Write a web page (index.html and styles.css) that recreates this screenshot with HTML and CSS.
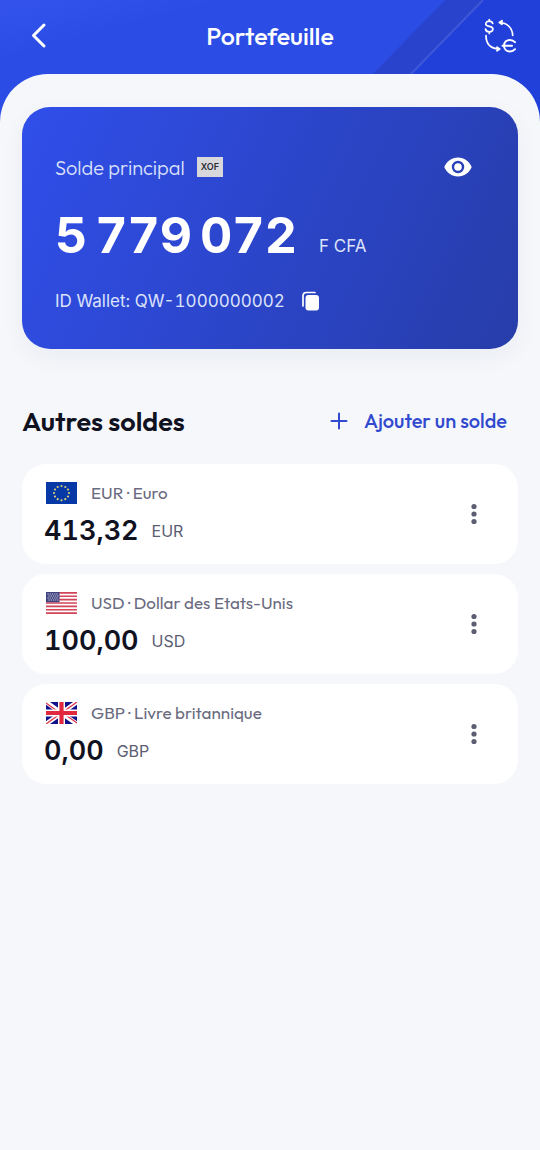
FILE: index.html
```html
<!DOCTYPE html>
<html lang="fr">
<head>
<meta charset="utf-8">
<meta name="viewport" content="width=device-width, initial-scale=1">
<title>Portefeuille</title>
<link rel="stylesheet" href="styles.css">
</head>
<body>
<div class="app">
  <svg class="backdrop" viewBox="0 0 200 160" aria-hidden="true">
    <path d="M143 0H200V160H-13z" fill="#2140da"/>
    <path d="M105 0H143L-13 160H-51z" fill="#2943cc"/>
    <path d="M143 0L-13 160" stroke="#3d58d8" stroke-width="2"/>
  </svg>
  <header class="topbar">
    <button class="icon-button" type="button" aria-label="Retour">
      <svg width="32" height="32" viewBox="0 0 32 32" fill="none" stroke="#fff" stroke-width="3" stroke-linecap="round" stroke-linejoin="round"><path d="M20 5L9.500 15.500L20 26"/></svg>
    </button>
    <h1 class="title">Portefeuille</h1>
    <button class="icon-button" type="button" aria-label="Convertir des devises">
      <svg width="36" height="38" viewBox="0 0 36 38" fill="none" stroke="#fff" stroke-width="1.700" stroke-linecap="round" stroke-linejoin="round">
        <path d="M10.700 6.500C10.300 4.800 9 4.200 7.300 4.200C5.400 4.200 3.800 5.200 3.800 6.900C3.800 10.600 10.900 8.200 10.900 12C10.900 13.800 9.200 14.800 7.300 14.800C5.300 14.800 3.800 13.900 3.500 12M7.300 2.500V4M7.300 15V16.500"/>
        <path d="M17.500 5.500C25 5.700 30.500 11 30.700 18.500M20 3.700L17.300 5.500L20 7.300Z"/>
        <path d="M4 18.500C4 26.500 8.500 31.500 17 32M15 30.200L17.700 32L15 33.800Z"/>
        <path stroke-width="2" d="M33 25.200C31.500 23.500 29.900 22.900 28 22.900C24.400 22.900 22 25.400 22 28.700C22 32 24.400 34.500 28 34.500C29.900 34.500 31.500 33.900 33 32.200M20.500 28.700H30"/>
      </svg>
    </button>
  </header>

  <main class="sheet">
    <section class="wallet" aria-label="Solde principal">
      <div class="wallet-head">
        <span class="wallet-label">Solde principal</span>
        <span class="badge">XOF</span>
        <button class="icon-button wallet-eye" type="button" aria-label="Masquer le solde">
          <svg width="28" height="20" viewBox="0 0 28 20"><path fill="#fff" fill-rule="evenodd" d="M14 .5C7.800 .5 2.500 4.400.3 10C2.500 15.600 7.800 19.500 14 19.500S25.500 15.600 27.700 10C25.500 4.400 20.200.5 14 .5ZM14 3.800A6.200 6.200 0 1 1 14 16.200A6.200 6.200 0 1 1 14 3.800Z"/><circle cx="14" cy="10" r="3.800" fill="#fff"/></svg>
        </button>
      </div>
      <p class="balance"><span class="balance-value">5&#8239;779&#8239;072</span><span class="balance-unit">F CFA</span></p>
      <div class="wallet-id">
        <span>ID Wallet: QW-1000000002</span>
        <button class="icon-button" type="button" aria-label="Copier l’identifiant">
          <svg width="20" height="20" viewBox="0 0 20 20"><rect x="4.500" y="4" width="13.500" height="15.500" rx="3" fill="#fff"/><path d="M2 15V5C2 2.800 3.300 1.500 5.500 1.500H14" fill="none" stroke="#fff" stroke-width="1.700" stroke-linecap="round"/></svg>
        </button>
      </div>
    </section>

    <section class="others" aria-labelledby="others-title">
      <div class="others-head">
        <h2 class="others-title" id="others-title">Autres soldes</h2>
        <button class="add" type="button">
          <svg width="18" height="18" viewBox="0 0 18 18" fill="none" stroke="currentColor" stroke-width="2" stroke-linecap="round"><path d="M9 1.500V16.500M1.500 9H16.500"/></svg>
          <span>Ajouter un solde</span>
        </button>
      </div>
      <ul class="list">
        <li class="account">
          <div class="account-body">
            <div class="account-name">
              <svg class="flag" viewBox="0 0 31 22" aria-hidden="true"><rect width="31" height="22" fill="#0639a6"/><g fill="#d9cf78"><circle cx="15.500" cy="4" r="1.100"/><circle cx="19.300" cy="5" r="1.100"/><circle cx="22" cy="7.500" r="1.100"/><circle cx="23" cy="11" r="1.100"/><circle cx="22" cy="14.500" r="1.100"/><circle cx="19.300" cy="17.200" r="1.100"/><circle cx="15.500" cy="18.300" r="1.100"/><circle cx="11.700" cy="17.200" r="1.100"/><circle cx="9" cy="14.500" r="1.100"/><circle cx="8" cy="11" r="1.100"/><circle cx="9" cy="7.500" r="1.100"/><circle cx="11.700" cy="5" r="1.100"/></g></svg>
              <span>EUR · Euro</span>
            </div>
            <p class="account-amount"><span class="account-value">413,32</span><span class="account-unit">EUR</span></p>
          </div>
          <button class="icon-button" type="button" aria-label="Options du solde EUR"><svg width="8" height="22" viewBox="0 0 8 22" fill="#5c5d73"><circle cx="4" cy="3.500" r="2.600"/><circle cx="4" cy="11" r="2.600"/><circle cx="4" cy="18.500" r="2.600"/></svg></button>
        </li>
        <li class="account">
          <div class="account-body">
            <div class="account-name">
              <svg class="flag" viewBox="0 0 31 22" aria-hidden="true"><rect width="31" height="22" fill="#fff"/><path d="M0 .85H31M0 4.230H31M0 7.620H31M0 11H31M0 14.380H31M0 17.770H31M0 21.150H31" stroke="#d0455a" stroke-width="1.700"/><rect width="13.500" height="10.200" fill="#41437f"/><path d="M1.500 2H12.500M2.500 4H12.500M1.500 6H12.500M2.500 8H12.500" stroke="#d5d6e8" stroke-width="1.200" stroke-dasharray="1.200 1"/></svg>
              <span>USD · Dollar des Etats-Unis</span>
            </div>
            <p class="account-amount"><span class="account-value">100,00</span><span class="account-unit">USD</span></p>
          </div>
          <button class="icon-button" type="button" aria-label="Options du solde USD"><svg width="8" height="22" viewBox="0 0 8 22" fill="#5c5d73"><circle cx="4" cy="3.500" r="2.600"/><circle cx="4" cy="11" r="2.600"/><circle cx="4" cy="18.500" r="2.600"/></svg></button>
        </li>
        <li class="account">
          <div class="account-body">
            <div class="account-name">
              <svg class="flag" viewBox="0 0 31 22" aria-hidden="true"><rect width="31" height="22" fill="#11118c"/><path d="M0 0L31 22M31 0L0 22" stroke="#fff" stroke-width="4.600"/><path d="M0 1L14 11M17 11L31 21M31 0L17 10M14 12L0 22" stroke="#e0344c" stroke-width="1.300"/><path d="M15.500 0V22M0 11H31" stroke="#fff" stroke-width="7"/><path d="M15.500 0V22M0 11H31" stroke="#e0283f" stroke-width="4.200"/></svg>
              <span>GBP · Livre britannique</span>
            </div>
            <p class="account-amount"><span class="account-value">0,00</span><span class="account-unit">GBP</span></p>
          </div>
          <button class="icon-button" type="button" aria-label="Options du solde GBP"><svg width="8" height="22" viewBox="0 0 8 22" fill="#5c5d73"><circle cx="4" cy="3.500" r="2.600"/><circle cx="4" cy="11" r="2.600"/><circle cx="4" cy="18.500" r="2.600"/></svg></button>
        </li>
      </ul>
    </section>
  </main>
</div>
</body>
</html>
```
FILE: styles.css
```css
* {
  box-sizing: border-box;
}

body,
h1,
h2,
p,
ul {
  margin: 0;
  padding: 0;
}

body {
  font-family: Outfit, Lato, "Open Sans", sans-serif;
  color: #10121f;
  background: #f5f7fb;
}

button {
  border: 0;
  padding: 0;
  background: none;
  font: inherit;
  color: inherit;
  cursor: pointer;
}

svg {
  display: block;
  flex: none;
}

.app {
  position: relative;
  display: flex;
  flex-direction: column;
  min-height: 100vh;
  background: linear-gradient(165deg, #3353ec 0, #2b4de6 60px, #2b4de6 160px);
}

.backdrop {
  position: absolute;
  top: 0;
  right: 0;
  width: 200px;
  height: 160px;
  overflow: visible;
}

.topbar {
  position: relative;
  display: grid;
  grid-template-columns: 36px 1fr 36px;
  align-items: center;
  padding: 16px 22px 18px;
}

.icon-button {
  display: grid;
  place-items: center;
  min-width: 20px;
  min-height: 20px;
}

.title {
  font-size: 25px;
  line-height: 40px;
  font-weight: 500;
  text-align: center;
  color: #fff;
}

.sheet {
  position: relative;
  flex: 1;
  padding: 33px 22px;
  border-radius: 48px 48px 0 0;
  background: #f5f7fb;
}

.wallet {
  padding: 40px 33px 36px;
  border-radius: 28px;
  color: #fff;
  background: linear-gradient(115deg, #304fea 0%, #2c46cd 45%, #273da9 100%);
  box-shadow: 0 8px 24px rgba(20, 30, 60, 0.05);
}

.wallet-head {
  display: flex;
  align-items: center;
  gap: 12px;
  min-height: 40px;
}

.wallet-label {
  font-size: 20px;
  font-weight: 300;
  color: #dce2fb;
}

.badge {
  padding: 0 4px;
  font: 600 9px/20px Inter, sans-serif;
  color: #2c2c34;
  background: #d8d8dc;
}

.wallet-eye {
  margin: 0 13px 0 auto;
}

.balance {
  display: flex;
  align-items: flex-end;
  gap: 22px;
  margin: 16px 0 22px;
  font-family: Inter, sans-serif;
}

.balance-value {
  font-size: 50px;
  line-height: 64px;
  font-weight: 700;
  font-variant-numeric: tabular-nums;
}

.balance-unit {
  font-size: 17px;
  line-height: 42px;
  color: #dce2fb;
}

.wallet-id {
  display: flex;
  align-items: center;
  gap: 16px;
  font: 400 17px/24px Inter, sans-serif;
  font-variant-numeric: tabular-nums;
  color: #dce2fb;
}

.others {
  margin-top: 52px;
}

.others-head {
  display: flex;
  align-items: center;
  justify-content: space-between;
  padding-right: 11px;
  margin-bottom: 23px;
}

.others-title {
  font-size: 27px;
  line-height: 40px;
  font-weight: 600;
}

.add {
  display: flex;
  align-items: center;
  gap: 16px;
  font-size: 20px;
  line-height: 38px;
  font-weight: 500;
  color: #3049cf;
}

.list {
  display: grid;
  gap: 10px;
  list-style: none;
}

.account {
  display: flex;
  align-items: center;
  justify-content: space-between;
  padding: 12px 34px 12px 22px;
  border-radius: 24px;
  background: #fff;
}

.account-name {
  display: flex;
  align-items: center;
  gap: 14px;
  padding-left: 2px;
  font-size: 17px;
  font-weight: 400;
  line-height: 34px;
  color: #6a6b80;
}

.flag {
  width: 31px;
  height: 22px;
}

.account-amount {
  display: flex;
  align-items: center;
  gap: 13px;
  font-family: Inter, sans-serif;
}

.account-value {
  font-size: 27px;
  line-height: 42px;
  font-weight: 600;
  font-variant-numeric: tabular-nums;
}

.account-unit {
  font-size: 16px;
  color: #5c5d73;
}
```
